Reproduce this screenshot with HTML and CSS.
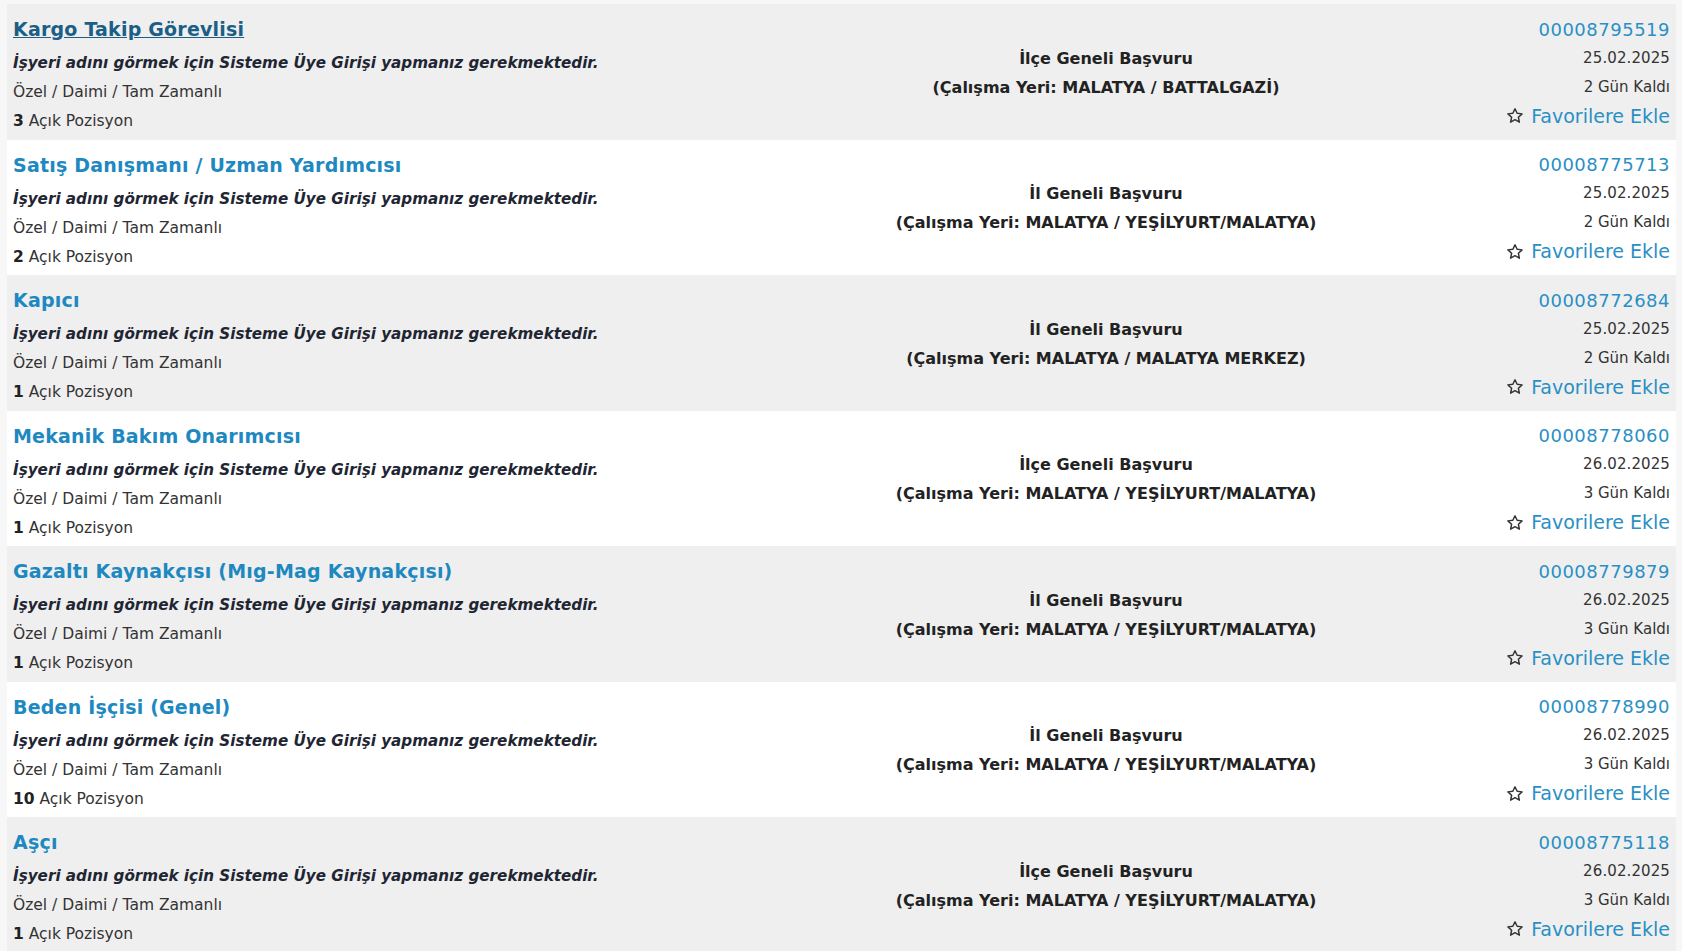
FILE: index.html
```html
<!DOCTYPE html>
<html lang="tr">
  <head>
    <meta charset="UTF-8" />
    <title>İş İlanları</title>
    <link rel="stylesheet" href="styles.css">
  </head>
  <body>
    <div class="list">
      <div class="job">
        <div class="job-info">
          <a href="#" class="job-title visited">Kargo Takip Görevlisi</a>
          <div class="company">İşyeri adını görmek için Sisteme Üye Girişi yapmanız gerekmektedir.</div>
          <div class="type">Özel / Daimi / Tam Zamanlı</div>
          <div class="count"><b>3</b> Açık Pozisyon</div>
        </div>
        <div class="job-place">
          <div>İlçe Geneli Başvuru</div>
          <div>(Çalışma Yeri: MALATYA / BATTALGAZİ)</div>
        </div>
        <div class="job-meta">
          <a href="#" class="job-no">00008795519</a>
          <div class="date">25.02.2025</div>
          <div>2 Gün Kaldı</div>
          <a href="#" class="fav"><svg viewBox="0 0 16 16"><path d="M8 1.6l1.9 4 4.4.5-3.3 3 .9 4.4L8 11.3l-3.9 2.2.9-4.4-3.3-3 4.4-.5z"/></svg>Favorilere Ekle</a>
        </div>
      </div>

      <div class="job">
        <div class="job-info">
          <a href="#" class="job-title">Satış Danışmanı / Uzman Yardımcısı</a>
          <div class="company">İşyeri adını görmek için Sisteme Üye Girişi yapmanız gerekmektedir.</div>
          <div class="type">Özel / Daimi / Tam Zamanlı</div>
          <div class="count"><b>2</b> Açık Pozisyon</div>
        </div>
        <div class="job-place">
          <div>İl Geneli Başvuru</div>
          <div>(Çalışma Yeri: MALATYA / YEŞİLYURT/MALATYA)</div>
        </div>
        <div class="job-meta">
          <a href="#" class="job-no">00008775713</a>
          <div class="date">25.02.2025</div>
          <div>2 Gün Kaldı</div>
          <a href="#" class="fav"><svg viewBox="0 0 16 16"><path d="M8 1.6l1.9 4 4.4.5-3.3 3 .9 4.4L8 11.3l-3.9 2.2.9-4.4-3.3-3 4.4-.5z"/></svg>Favorilere Ekle</a>
        </div>
      </div>

      <div class="job">
        <div class="job-info">
          <a href="#" class="job-title">Kapıcı</a>
          <div class="company">İşyeri adını görmek için Sisteme Üye Girişi yapmanız gerekmektedir.</div>
          <div class="type">Özel / Daimi / Tam Zamanlı</div>
          <div class="count"><b>1</b> Açık Pozisyon</div>
        </div>
        <div class="job-place">
          <div>İl Geneli Başvuru</div>
          <div>(Çalışma Yeri: MALATYA / MALATYA MERKEZ)</div>
        </div>
        <div class="job-meta">
          <a href="#" class="job-no">00008772684</a>
          <div class="date">25.02.2025</div>
          <div>2 Gün Kaldı</div>
          <a href="#" class="fav"><svg viewBox="0 0 16 16"><path d="M8 1.6l1.9 4 4.4.5-3.3 3 .9 4.4L8 11.3l-3.9 2.2.9-4.4-3.3-3 4.4-.5z"/></svg>Favorilere Ekle</a>
        </div>
      </div>

      <div class="job">
        <div class="job-info">
          <a href="#" class="job-title">Mekanik Bakım Onarımcısı</a>
          <div class="company">İşyeri adını görmek için Sisteme Üye Girişi yapmanız gerekmektedir.</div>
          <div class="type">Özel / Daimi / Tam Zamanlı</div>
          <div class="count"><b>1</b> Açık Pozisyon</div>
        </div>
        <div class="job-place">
          <div>İlçe Geneli Başvuru</div>
          <div>(Çalışma Yeri: MALATYA / YEŞİLYURT/MALATYA)</div>
        </div>
        <div class="job-meta">
          <a href="#" class="job-no">00008778060</a>
          <div class="date">26.02.2025</div>
          <div>3 Gün Kaldı</div>
          <a href="#" class="fav"><svg viewBox="0 0 16 16"><path d="M8 1.6l1.9 4 4.4.5-3.3 3 .9 4.4L8 11.3l-3.9 2.2.9-4.4-3.3-3 4.4-.5z"/></svg>Favorilere Ekle</a>
        </div>
      </div>

      <div class="job">
        <div class="job-info">
          <a href="#" class="job-title">Gazaltı Kaynakçısı (Mıg-Mag Kaynakçısı)</a>
          <div class="company">İşyeri adını görmek için Sisteme Üye Girişi yapmanız gerekmektedir.</div>
          <div class="type">Özel / Daimi / Tam Zamanlı</div>
          <div class="count"><b>1</b> Açık Pozisyon</div>
        </div>
        <div class="job-place">
          <div>İl Geneli Başvuru</div>
          <div>(Çalışma Yeri: MALATYA / YEŞİLYURT/MALATYA)</div>
        </div>
        <div class="job-meta">
          <a href="#" class="job-no">00008779879</a>
          <div class="date">26.02.2025</div>
          <div>3 Gün Kaldı</div>
          <a href="#" class="fav"><svg viewBox="0 0 16 16"><path d="M8 1.6l1.9 4 4.4.5-3.3 3 .9 4.4L8 11.3l-3.9 2.2.9-4.4-3.3-3 4.4-.5z"/></svg>Favorilere Ekle</a>
        </div>
      </div>

      <div class="job">
        <div class="job-info">
          <a href="#" class="job-title">Beden İşçisi (Genel)</a>
          <div class="company">İşyeri adını görmek için Sisteme Üye Girişi yapmanız gerekmektedir.</div>
          <div class="type">Özel / Daimi / Tam Zamanlı</div>
          <div class="count"><b>10</b> Açık Pozisyon</div>
        </div>
        <div class="job-place">
          <div>İl Geneli Başvuru</div>
          <div>(Çalışma Yeri: MALATYA / YEŞİLYURT/MALATYA)</div>
        </div>
        <div class="job-meta">
          <a href="#" class="job-no">00008778990</a>
          <div class="date">26.02.2025</div>
          <div>3 Gün Kaldı</div>
          <a href="#" class="fav"><svg viewBox="0 0 16 16"><path d="M8 1.6l1.9 4 4.4.5-3.3 3 .9 4.4L8 11.3l-3.9 2.2.9-4.4-3.3-3 4.4-.5z"/></svg>Favorilere Ekle</a>
        </div>
      </div>

      <div class="job">
        <div class="job-info">
          <a href="#" class="job-title">Aşçı</a>
          <div class="company">İşyeri adını görmek için Sisteme Üye Girişi yapmanız gerekmektedir.</div>
          <div class="type">Özel / Daimi / Tam Zamanlı</div>
          <div class="count"><b>1</b> Açık Pozisyon</div>
        </div>
        <div class="job-place">
          <div>İlçe Geneli Başvuru</div>
          <div>(Çalışma Yeri: MALATYA / YEŞİLYURT/MALATYA)</div>
        </div>
        <div class="job-meta">
          <a href="#" class="job-no">00008775118</a>
          <div class="date">26.02.2025</div>
          <div>3 Gün Kaldı</div>
          <a href="#" class="fav"><svg viewBox="0 0 16 16"><path d="M8 1.6l1.9 4 4.4.5-3.3 3 .9 4.4L8 11.3l-3.9 2.2.9-4.4-3.3-3 4.4-.5z"/></svg>Favorilere Ekle</a>
        </div>
      </div>
    </div>
  </body>
</html>
```

FILE: styles.css
```css
body {
  font-family: "DejaVu Sans", Verdana, sans-serif;
  background-color: #f7f7f7;
  color: #222;
  margin: 0;
  padding: 0;
  overflow: hidden;
}
.list {
  padding: 4px 6px 0 7px;
}
.job {
  display: grid;
  grid-template-columns: 860px 466px 1fr;
  box-sizing: border-box;
  height: 135.5px;
  padding: 7px 6px 0 6px;
  background: #efefef;
}
.job:nth-child(even) {
  background: #fff;
}
.job-info,
.job-meta {
  display: flex;
  flex-direction: column;
}
.job-info > *,
.job-meta > * {
  height: 29px;
  line-height: 29px;
}
.job-info > .job-title {
  height: 38px;
  line-height: 36px;
}
.job-title {
  color: #1e88c0;
  font-weight: bold;
  font-size: 19px;
  letter-spacing: 0.2px;
  text-decoration: none;
  align-self: flex-start;
}
.job-title.visited {
  color: #1b5f86;
  text-decoration: underline;
}
.company {
  font-weight: bold;
  font-style: italic;
  font-size: 15.2px;
  color: #1f2633;
}
.type,
.count {
  font-size: 15.5px;
  color: #333;
}
.count b {
  color: #222;
}
.job-place {
  padding-top: 32.5px;
  text-align: center;
  font-weight: bold;
  font-size: 16px;
  line-height: 29px;
  color: #222;
}
.job-meta {
  padding-top: 3.5px;
  align-items: flex-end;
  font-size: 15px;
  color: #333;
}
.job-meta .date {
  letter-spacing: 0.1px;
}
.job-no {
  color: #2a8fc4;
  font-size: 18px;
  letter-spacing: 0.5px;
  text-decoration: none;
}
.fav {
  display: flex;
  align-items: center;
  gap: 7px;
  color: #2a8fc4;
  font-size: 19px;
  text-decoration: none;
}
.fav svg {
  width: 18px;
  height: 18px;
  fill: none;
  stroke: #333;
  stroke-width: 1.3;
  stroke-linejoin: round;
}
```
